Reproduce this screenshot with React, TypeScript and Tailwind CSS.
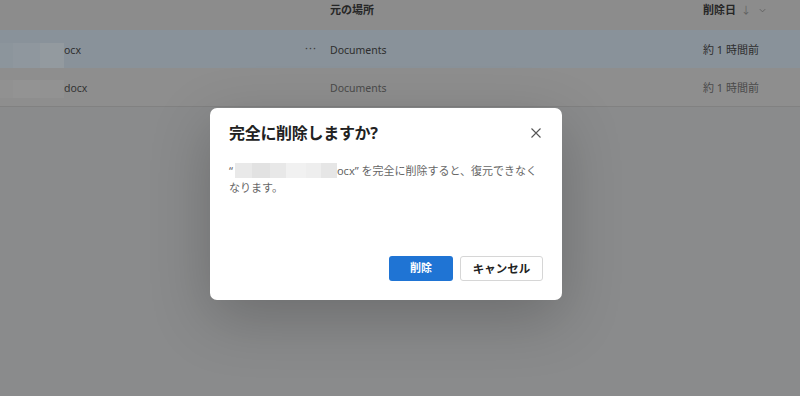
import React from "react";

const font = { fontFamily: '"Noto Sans", "Noto Sans CJK JP", sans-serif' };

export default function App() {
  return (
    <div
      className="relative w-[800px] h-[396px] overflow-hidden bg-[#8a8b8c] text-[#2b2b2b]"
      style={font}
    >
      {/* header */}
      <div className="flex h-[30px] items-center pb-[9px] bg-[#8c8c8c]">
        <div className="w-[330px]" />
        <div className="flex-1 text-[11px] font-bold text-[#262626]">元の場所</div>
        <div className="w-[97px] flex items-center gap-[5px] text-[11px] font-bold text-[#262626]">
          <span>削除日</span>
          <span className="font-normal text-[#606060] text-[10px]">↓</span>
          <svg width="9" height="9" viewBox="0 0 10 10" className="ml-[2px]">
            <path d="M2 3.5 L5 6.5 L8 3.5" fill="none" stroke="#606060" strokeWidth="1" />
          </svg>
        </div>
      </div>
      {/* row 1 */}
      <div className="relative flex h-[38px] items-center pt-[3px] bg-[#89929a]">
        <div className="absolute left-0 top-[13px] flex h-[27px] w-[64px]">
          <div className="w-[13px] bg-[#8c959c]" />
          <div className="w-[27px] bg-[#8f979e]" />
          <div className="w-[24px] bg-[#939a9f]" />
        </div>
        <div className="w-[64px]" />
        <div className="w-[241px] text-[10.5px] text-[#2e2e2e]">ocx</div>
        <div className="w-[25px] text-[11px] tracking-[1px] text-[#3c3c3c] -mt-[4px]">···</div>
        <div className="flex-1 text-[10.5px] text-[#2e2e2e]">Documents</div>
        <div className="w-[97px] text-[11px] text-[#2e2e2e]">約 1 時間前</div>
      </div>
      {/* row 2 */}
      <div className="relative flex h-[38px] items-center pt-[3px] bg-[#8e8e8e]">
        <div className="absolute left-0 top-[12px] flex h-[18px] w-[64px]">
          <div className="w-[13px] bg-[#919191]" />
          <div className="w-[27px] bg-[#939393]" />
          <div className="w-[24px] bg-[#929292]" />
        </div>
        <div className="w-[64px]" />
        <div className="w-[266px] text-[10.5px] text-[#333]">docx</div>
        <div className="flex-1 text-[10.5px] text-[#4a4a4a]">Documents</div>
        <div className="w-[97px] text-[11px] text-[#4a4a4a]">約 1 時間前</div>
      </div>
      <div className="h-px bg-[#818181]" />

      {/* dialog */}
      <div className="absolute left-[210px] top-[108px] w-[352px] h-[192px] rounded-[7px] bg-white shadow-[0_18px_60px_rgba(0,0,0,0.22)] flex flex-col px-[19px] pt-[14px] pb-[19px]">
        <div className="flex items-center justify-between h-[22px]">
          <div className="text-[16px] font-bold text-[#222] tracking-[-0.3px]">完全に削除しますか?</div>
          <svg width="12" height="12" viewBox="0 0 12 12" className="mr-[1px]">
            <path d="M1.5 1.5 L10.5 10.5 M10.5 1.5 L1.5 10.5" stroke="#555" strokeWidth="1.1" fill="none" />
          </svg>
        </div>
        <div className="mt-[18px] text-[11px] leading-[17px] text-[#666]">
          <span>“</span>
          <span className="inline-flex align-[-3px] h-[15px] w-[102px] ml-[2px]">
            <span className="w-[17px] bg-[#e9e9e9]" />
            <span className="w-[18px] bg-[#e2e2e2]" />
            <span className="w-[16px] bg-[#e8e8e8]" />
            <span className="w-[20px] bg-[#f1f1f1]" />
            <span className="w-[15px] bg-[#eeeeee]" />
            <span className="w-[16px] bg-[#e6e6e6]" />
          </span>
          <span>ocx” を完全に削除すると、復元できなくなります。</span>
        </div>
        <div className="flex-1" />
        <div className="flex justify-end gap-[7px]">
          <button className="h-[25px] w-[64px] rounded-[3px] bg-[#1f74d4] text-white text-[11px] font-bold">
            削除
          </button>
          <button className="h-[25px] w-[83px] rounded-[3px] bg-white border border-[#d6d6d6] text-[#222] text-[11.5px] font-bold">
            キャンセル
          </button>
        </div>
      </div>
    </div>
  );
}
